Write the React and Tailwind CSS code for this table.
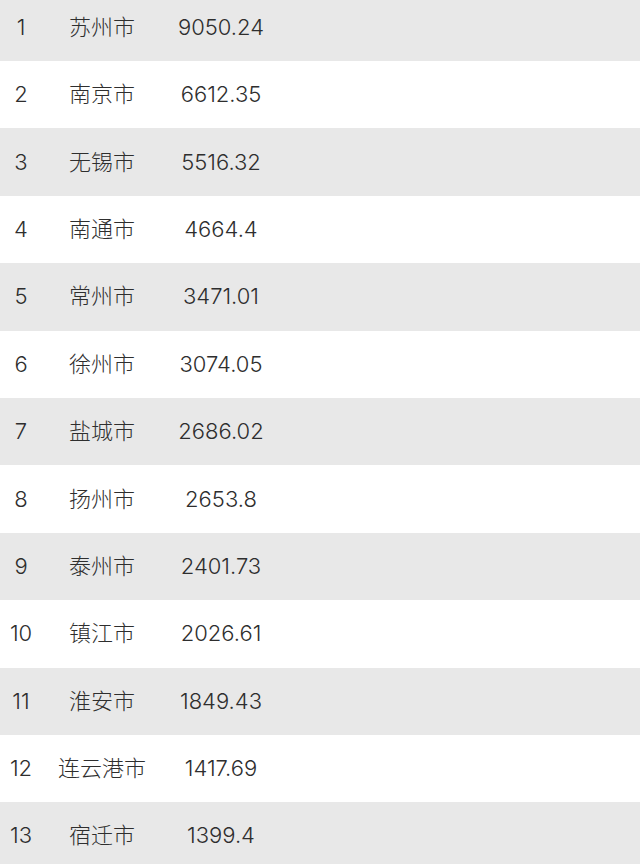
import React from "react";

const rows = [
  ["1", "苏州市", "9050.24"],
  ["2", "南京市", "6612.35"],
  ["3", "无锡市", "5516.32"],
  ["4", "南通市", "4664.4"],
  ["5", "常州市", "3471.01"],
  ["6", "徐州市", "3074.05"],
  ["7", "盐城市", "2686.02"],
  ["8", "扬州市", "2653.8"],
  ["9", "泰州市", "2401.73"],
  ["10", "镇江市", "2026.61"],
  ["11", "淮安市", "1849.43"],
  ["12", "连云港市", "1417.69"],
  ["13", "宿迁市", "1399.4"],
];

export default function App() {
  return (
    <div className="h-[864px] w-[640px] overflow-hidden bg-white">
      <div
        className="-mt-[6.4px] flex flex-col text-[22px] font-light text-[#2e2e2e]"
        style={{ fontFamily: 'Inter, "Noto Sans CJK SC", sans-serif' }}
      >
        {rows.map(([n, city, v], i) => (
          <div
            key={n}
            className={`flex h-[67.4px] items-center ${i % 2 === 0 ? "bg-[#e8e8e8]" : "bg-white"}`}
          >
            <div className="w-[42px] text-center">{n}</div>
            <div className="w-[120px] text-center">{city}</div>
            <div className="w-[118px] text-center">{v}</div>
          </div>
        ))}
      </div>
    </div>
  );
}
